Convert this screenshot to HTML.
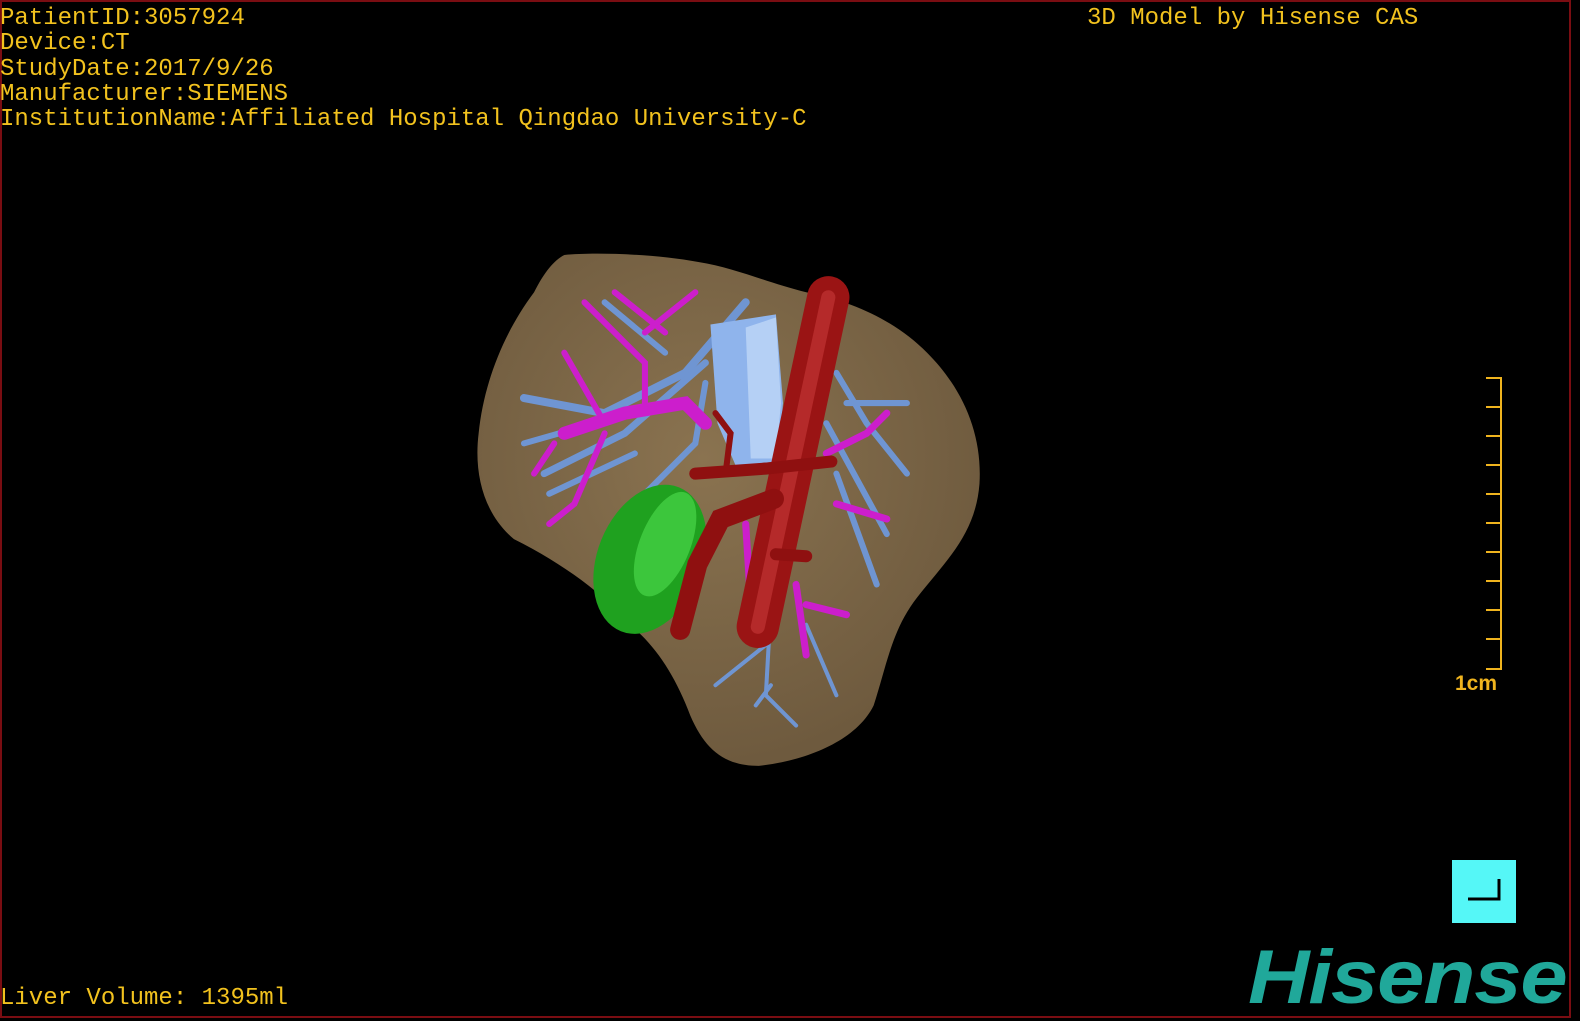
<!DOCTYPE html>
<html><head><meta charset="utf-8"><style>
html,body{margin:0;padding:0;background:#000;width:1580px;height:1020px;overflow:hidden}
.frame{position:absolute;left:0;top:0;width:1567px;height:1014px;border:2px solid #7a0d12}
.t{position:absolute;font-family:"Liberation Mono",monospace;font-size:24px;color:#f2c21e;white-space:pre;line-height:25.3px;left:0}
.logo{position:absolute;left:1248px;top:934px;font-family:"Liberation Sans",sans-serif;font-weight:bold;font-style:italic;font-size:76px;color:#20a89a;letter-spacing:-1px;transform:scaleX(1.12);transform-origin:0 0}
</style></head><body>
<div class="frame"></div>
<svg width="1580" height="1020" style="position:absolute;left:0;top:0">
<defs>
<radialGradient id="lv" cx="0.45" cy="0.4" r="0.6"><stop offset="0" stop-color="#8a7350"/><stop offset="1" stop-color="#6e5a3e"/></radialGradient>
</defs>
<g transform="translate(0,0) scale(1.0077)">
<path d="M560,253 C590,250 650,252 693,260 C730,266 760,280 800,290 C850,300 890,320 920,350 C955,385 975,430 972,480 C968,530 940,555 910,593 C885,625 880,660 867,700 C850,735 800,755 753,760 C720,760 700,745 685,710 C670,670 650,640 625,620 C600,590 560,560 510,535 C480,510 470,470 475,430 C480,380 500,330 530,290 C540,270 550,258 560,253 Z" fill="url(#lv)"/>
<g stroke="#6f95d2" stroke-linecap="round" fill="none">
<path d="M520,395 L600,410 L680,370 L740,300" stroke-width="8"/>
<path d="M540,470 L620,430 L700,360" stroke-width="7"/>
<path d="M520,440 L590,420 M545,490 L630,450 M600,300 L660,350 M610,520 L690,440 L700,380" stroke-width="6"/>
<path d="M830,370 L860,420 L900,470 M820,420 L880,530 M830,470 L870,580 M840,400 L900,400" stroke-width="6"/>
<path d="M765,600 L760,690 L790,720 M760,640 L710,680 M765,680 L750,700 M800,620 L830,690" stroke-width="4"/>
</g>
<g stroke="#cc1ecc" stroke-linecap="round" fill="none">
<path d="M560,430 L620,410 L680,400 L700,420" stroke-width="13"/>
<path d="M560,350 L600,420 M580,300 L640,360 L640,410 M550,440 L530,470 M600,430 L570,500 L545,520 M640,330 L690,290 M610,290 L660,330" stroke-width="6"/>
<path d="M820,450 L860,430 L880,410 M830,500 L880,515 M790,580 L800,650 M800,600 L840,610 M740,520 L745,600" stroke-width="7"/>
</g>
<path d="M705,322 L770,312 L777,400 L772,458 L730,462 L712,420 Z" fill="#8fb4ec"/>
<path d="M740,325 L770,315 L775,400 L770,455 L745,455 Z" fill="#b5d0f5"/>
<ellipse cx="645" cy="555" rx="52" ry="77" transform="rotate(22 645 555)" fill="#1fa11f"/>
<ellipse cx="660" cy="540" rx="25" ry="55" transform="rotate(22 660 540)" fill="#3cc63c"/>
<g stroke-linecap="round" fill="none">
<path d="M822,295 L752,622" stroke="#9a1414" stroke-width="42"/>
<path d="M822,295 L752,622" stroke="#b52a2a" stroke-width="14"/>
<path d="M768,495 L715,515 L692,560 L675,625" stroke="#8f1010" stroke-width="20"/>
<path d="M690,470 L760,465 L825,458" stroke="#8f1010" stroke-width="12"/>
<path d="M710,410 L725,430 L720,470" stroke="#8f1010" stroke-width="6"/>
<path d="M770,550 L800,552" stroke="#8f1010" stroke-width="12"/>
</g>
</g>
<g stroke="#f0b41e" stroke-width="2" fill="none">
<path d="M1486,378 H1501 V669 H1486"/>
<path d="M1486,407 H1501 M1486,436 H1501 M1486,465 H1501 M1486,494 H1501 M1486,523 H1501 M1486,552 H1501 M1486,581 H1501 M1486,610 H1501 M1486,639 H1501"/>
</g>
<text x="1455" y="690" font-family="Liberation Sans,sans-serif" font-size="21" font-weight="bold" fill="#f0b41e">1cm</text>
<rect x="1452" y="860" width="64" height="63" fill="#55f7f7"/>
<path d="M1468,899 H1499 V879" stroke="#000" stroke-width="3" fill="none"/>
</svg>
<div class="t" style="top:6px">PatientID:3057924
Device:CT
StudyDate:2017/9/26
Manufacturer:SIEMENS
InstitutionName:Affiliated Hospital Qingdao University-C</div>
<div class="t" style="top:6px;left:1087px">3D Model by Hisense CAS</div>
<div class="t" style="top:986px">Liver Volume: 1395ml</div>
<div class="logo">Hisense</div>
</body></html>
